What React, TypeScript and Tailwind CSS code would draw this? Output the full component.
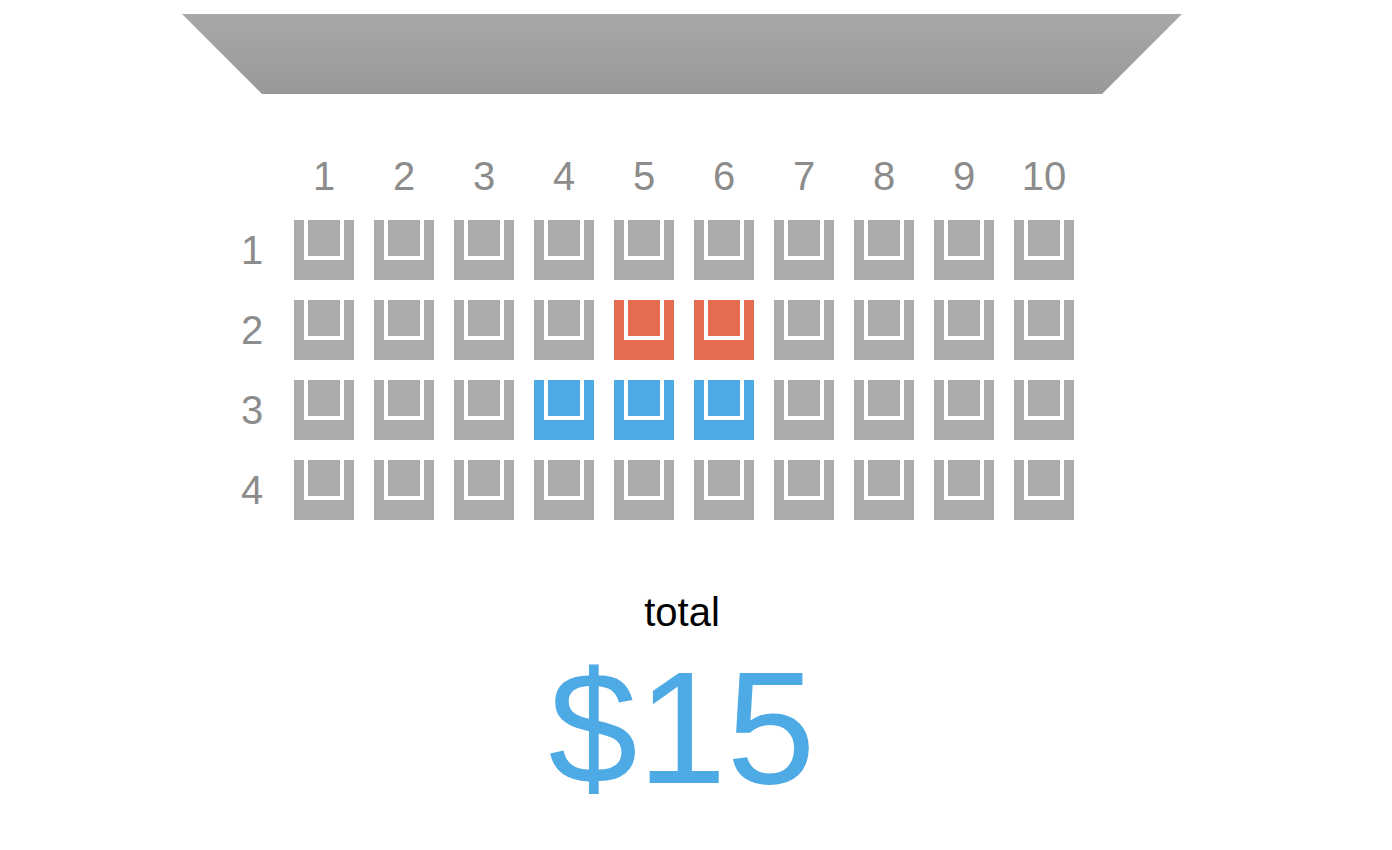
const COLS = [1, 2, 3, 4, 5, 6, 7, 8, 9, 10];
const ROWS = [1, 2, 3, 4];

// seats that are already taken / currently picked
const TAKEN = ["2-5", "2-6"];
const PICKED = ["3-4", "3-5", "3-6"];

function Seat({ id }: { id: string }) {
  let color = "bg-[#ababab]";
  if (TAKEN.includes(id)) color = "bg-[#e36d4e]";
  if (PICKED.includes(id)) color = "bg-[#4eaae4]";

  return (
    <div className={`w-[60px] h-[60px] flex justify-center ${color}`}>
      <div className="w-10 h-10 border-x-4 border-b-4 border-white" />
    </div>
  );
}

export default function App() {
  return (
    <div className="w-[1364px] min-h-[850px] bg-white pt-[14px] font-['Liberation_Sans',Arial,sans-serif]">
      {/* Screen */}
      <div className="ml-[182px] w-[1000px] h-20 bg-gradient-to-b from-[#a8a8a8] to-[#999999] [clip-path:polygon(0_0,100%_0,92%_100%,8%_100%)]" />

      {/* Seats */}
      <div className="mt-[58px] ml-[230px] grid grid-cols-[44px_repeat(10,60px)] gap-5 text-[40px] leading-[48px] text-[#8c8c8c]">
        <div />
        {COLS.map((col) => (
          <div key={col} className="text-center">
            {col}
          </div>
        ))}
        {ROWS.map((row) => (
          <div key={row} className="contents">
            <div className="h-[60px] flex items-center justify-center">{row}</div>
            {COLS.map((col) => (
              <Seat key={col} id={`${row}-${col}`} />
            ))}
          </div>
        ))}
      </div>

      {/* Total */}
      <div className="mt-[71px] text-center">
        <div className="text-[40px] leading-[42px] text-black">total</div>
        <div className="mt-[3px] text-[160px] leading-[184px] text-[#4eaae4]">$15</div>
      </div>
    </div>
  );
}
